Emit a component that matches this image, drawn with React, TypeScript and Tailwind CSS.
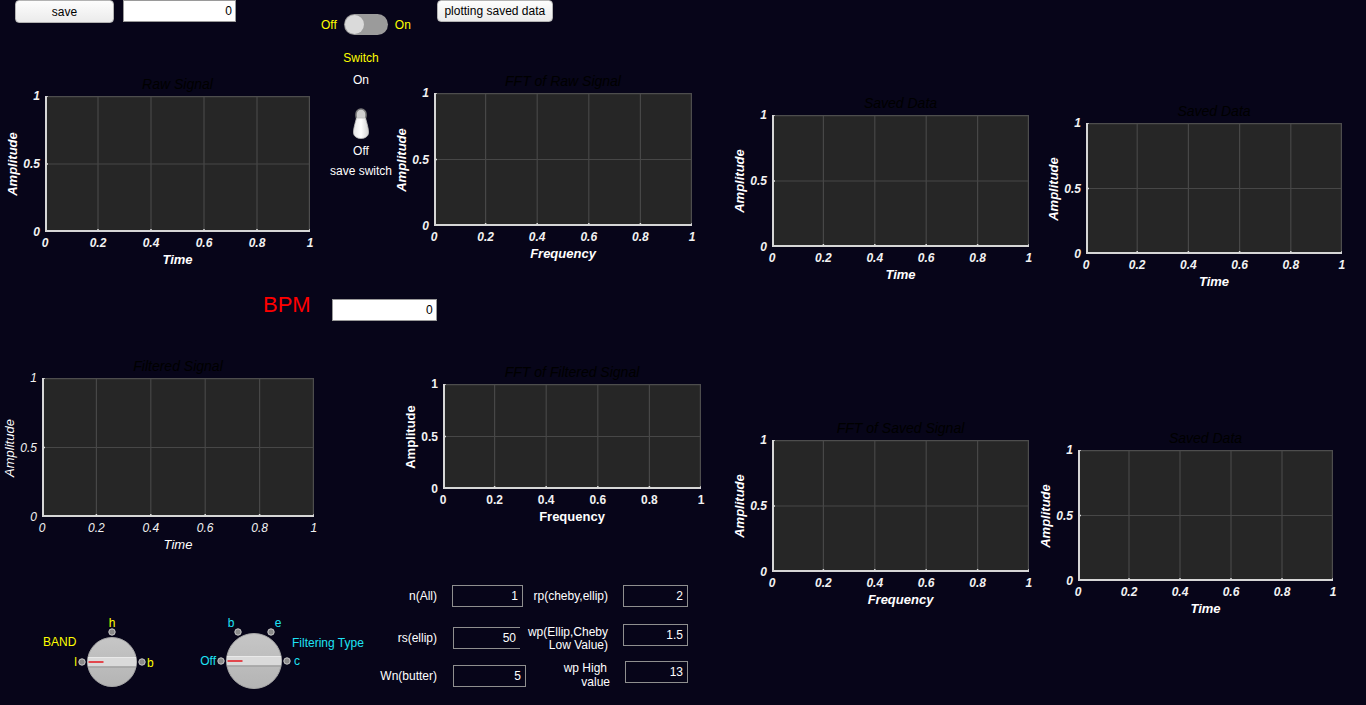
import React from "react";

type Variant = "bi" | "i" | "b";

interface PlotProps {
  title: string;
  xlabel: string;
  w: number;
  h: number;
  variant?: Variant;
  className?: string;
}

const labelStyle = (v: Variant) =>
  v === "bi" ? "font-bold italic" : v === "i" ? "italic" : "font-bold";

const Plot = ({ title, xlabel, w, h, variant = "bi", className = "" }: PlotProps) => {
  const lbl = labelStyle(variant);
  const xs = [0, 1, 2, 3, 4, 5];
  return (
    <div className={`grid grid-cols-[22px_21px_auto] ${className}`}>
      {/* title (black, nearly hidden on the dark figure) */}
      <div className="col-start-3 row-start-1 h-[16px] mb-[4px] text-center text-[14px] leading-[16px] italic text-black whitespace-nowrap">
        {title}
      </div>
      <div className="col-start-1 row-start-2 flex items-center justify-center">
        <span className={`-rotate-90 whitespace-nowrap text-[13px] leading-[16px] text-white ${lbl}`}>
          Amplitude
        </span>
      </div>
      <div className="col-start-2 row-start-2 -my-[7px] pr-[5px] flex flex-col justify-between items-end">
        {["1", "0.5", "0"].map((t) => (
          <span key={t} className={`h-[14px] leading-[14px] text-[12px] text-[#f2f2f2] whitespace-nowrap ${lbl}`}>
            {t}
          </span>
        ))}
      </div>
      <svg className="col-start-3 row-start-2 block" width={w} height={h}>
        <rect x={0} y={0} width={w} height={h} fill="#262626" />
        {[1, 2, 3, 4].map((i) => (
          <line key={i} x1={(w * i) / 5} y1={0} x2={(w * i) / 5} y2={h} stroke="#474747" strokeWidth={1.2} />
        ))}
        <line x1={0} y1={h / 2} x2={w} y2={h / 2} stroke="#474747" strokeWidth={1.2} />
        <line x1={0} y1={0.6} x2={w} y2={0.6} stroke="#4d4d4d" strokeWidth={1.2} />
        <line x1={w - 0.6} y1={0} x2={w - 0.6} y2={h} stroke="#4d4d4d" strokeWidth={1.2} />
        {xs.map((i) => (
          <line key={i} x1={(w * i) / 5} y1={h} x2={(w * i) / 5} y2={h - 3} stroke="#d6d6d6" strokeWidth={1.5} />
        ))}
        {[0, 0.5, 1].map((f) => (
          <line key={f} x1={0} y1={h * f} x2={3} y2={h * f} stroke="#d6d6d6" strokeWidth={1.5} />
        ))}
        <line x1={1} y1={0} x2={1} y2={h} stroke="#d6d6d6" strokeWidth={2} />
        <line x1={0} y1={h - 1} x2={w} y2={h - 1} stroke="#d6d6d6" strokeWidth={2} />
      </svg>
      <div className="col-start-3 row-start-3 mt-[4px] -mx-[12px] flex justify-between">
        {["0", "0.2", "0.4", "0.6", "0.8", "1"].map((t) => (
          <span key={t} className={`w-[24px] text-center leading-[14px] text-[12px] text-[#f2f2f2] ${lbl}`}>
            {t}
          </span>
        ))}
      </div>
      <div className={`col-start-3 row-start-4 mt-[2px] text-center text-[13px] leading-[16px] text-white ${lbl}`}>
        {xlabel}
      </div>
    </div>
  );
};

const Field = ({ value, className = "" }: { value: string; className?: string }) => (
  <div
    className={`h-[22px] shrink-0 border border-[#8f8f8f] text-right pr-[4px] text-[12px] leading-[20px] text-white ${className}`}
  >
    {value}
  </div>
);

const Dot = ({ x, y }: { x: number; y: number }) => (
  <circle cx={x} cy={y} r={3.2} fill="#8a8a8a" stroke="#c8c8c8" strokeWidth={1} />
);

const KnobBody = ({ cx, cy, r, id }: { cx: number; cy: number; r: number; id: string }) => (
  <g>
    <defs>
      <linearGradient id={`${id}-g`} x1="0" y1="0" x2="0" y2="1">
        <stop offset="0" stopColor="#c6c6c6" />
        <stop offset="1" stopColor="#b4b4b4" />
      </linearGradient>
      <clipPath id={`${id}-c`}>
        <circle cx={cx} cy={cy} r={r} />
      </clipPath>
    </defs>
    <circle cx={cx} cy={cy} r={r} fill={`url(#${id}-g)`} stroke="#a6a6a6" strokeWidth={1} />
    <g clipPath={`url(#${id}-c)`}>
      <rect x={cx - r} y={cy - 4.5} width={r * 2} height={9} fill="#dadada" />
      <line x1={cx - r} y1={cy - 4.5} x2={cx + r} y2={cy - 4.5} stroke="#e9e9e9" strokeWidth={1} />
      <line x1={cx - r} y1={cy + 5} x2={cx + r} y2={cy + 5} stroke="#a2a2a2" strokeWidth={1.5} />
    </g>
    <line x1={cx - r + 1} y1={cy} x2={cx - r + 16} y2={cy} stroke="#e2474d" strokeWidth={2} />
  </g>
);

const LeverSwitch = () => (
  <svg width={18} height={31} className="block">
    <defs>
      <linearGradient id="lever" x1="0" y1="0" x2="1" y2="0">
        <stop offset="0" stopColor="#e6e6e6" />
        <stop offset="0.5" stopColor="#ffffff" />
        <stop offset="1" stopColor="#d4d4d4" />
      </linearGradient>
    </defs>
    <rect x={4} y={1} width={10} height={12} rx={5} fill="#cfcfcf" stroke="#7a7a7a" strokeWidth={1.5} />
    <path d="M4.5 10 L13.5 10 Q17 22 16.5 25 A7.5 5.5 0 0 1 1.5 25 Q1 22 4.5 10 Z" fill="url(#lever)" stroke="#bdbdbd" strokeWidth={0.8} />
  </svg>
);

const App = () => {
  return (
    <div className="w-full h-[705px] overflow-hidden bg-[#070519] flex font-['Liberation_Sans',Arial,sans-serif]">
      {/* LEFT HALF */}
      <div className="w-[720px] shrink-0 flex flex-col">
        {/* top bar */}
        <div className="h-[35px] flex items-start">
          <button className="ml-[15px] w-[99px] h-[23px] rounded-[4px] border border-[#b3b3b3] bg-gradient-to-b from-[#fdfdfd] to-[#ebebeb] text-[12px] text-black">
            save
          </button>
          <div className="ml-[9px] w-[113px] h-[22px] bg-white border border-[#9a9a9a] text-right pr-[3px] text-[12px] leading-[20px] text-black">
            0
          </div>
          <div className="ml-[85px] mt-[14px] h-[21px] flex items-center text-[12px] text-[#ffff00]">
            <span>Off</span>
            <div className="ml-[7px] w-[44px] h-[21px] rounded-full bg-[#9b9b9b] flex items-center pl-[1px]">
              <div className="w-[19px] h-[19px] rounded-full bg-[#dadada]" />
            </div>
            <span className="ml-[7px]">On</span>
          </div>
          <button className="ml-[26px] w-[116px] h-[22px] rounded-[4px] border border-[#b3b3b3] bg-gradient-to-b from-[#fdfdfd] to-[#ebebeb] text-[12px] text-black whitespace-nowrap">
            plotting saved data
          </button>
        </div>

        {/* raw signal row */}
        <div className="flex items-start">
          <Plot className="ml-[2px] mt-[41px]" title="Raw Signal" xlabel="Time" w={265} h={136} />
          <div className="ml-[22px] mt-[16px] w-[58px] flex flex-col items-center text-[12px] leading-[14px] whitespace-nowrap">
            <span className="text-[#ffff00]">Switch</span>
            <span className="mt-[8px] text-white">On</span>
            <div className="mt-[21px]">
              <LeverSwitch />
            </div>
            <span className="mt-[5px] text-white">Off</span>
            <span className="mt-[6px] text-white">save switch</span>
          </div>
          <Plot className="ml-[1px] mt-[38px]" title="FFT of Raw Signal" xlabel="Frequency" w={258} h={133} />
        </div>

        {/* BPM */}
        <div className="flex items-start">
          <span className="ml-[263px] mt-[24px] text-[22px] leading-[26px] text-[#ff0000]">BPM</span>
          <div className="ml-[21px] mt-[31px] w-[105px] h-[22px] bg-white border border-[#9a9a9a] text-right pr-[3px] text-[12px] leading-[20px] text-black">
            0
          </div>
        </div>

        {/* filtered row */}
        <div className="flex items-start">
          <Plot className="-ml-[1px] mt-[37px]" title="Filtered Signal" xlabel="Time" w={272} h={139} variant="i" />
          <Plot className="ml-[86px] mt-[43px]" title="FFT of Filtered Signal" xlabel="Frequency" w={258} h={105} variant="b" />
        </div>

        {/* knobs and filter parameters */}
        <div className="flex items-start">
          <svg width={125} height={80} className="ml-[40px] mt-[59px] block">
            <text x={3} y={34} fontSize={12} fill="#ffff00">BAND</text>
            <text x={72} y={15} fontSize={12} fill="#ffff00" textAnchor="middle">h</text>
            <text x={37} y={54} fontSize={12} fill="#ffff00" textAnchor="end">l</text>
            <text x={107} y={55} fontSize={12} fill="#ffff00">b</text>
            <Dot x={72} y={20} />
            <Dot x={42} y={50} />
            <Dot x={102} y={50} />
            <KnobBody cx={72} cy={50} r={24.5} id="k1" />
          </svg>
          <svg width={180} height={80} className="ml-[25px] mt-[59px] block">
            <text x={26} y={53} fontSize={12} fill="#1ee3f5" textAnchor="end">Off</text>
            <text x={41} y={15} fontSize={12} fill="#1ee3f5" textAnchor="middle">b</text>
            <text x={88} y={15} fontSize={12} fill="#1ee3f5" textAnchor="middle">e</text>
            <text x={104} y={53} fontSize={12} fill="#1ee3f5">c</text>
            <text x={102} y={35} fontSize={12} fill="#1ee3f5">Filtering Type</text>
            <Dot x={31} y={49} />
            <Dot x={48} y={20} />
            <Dot x={81} y={20} />
            <Dot x={97} y={49} />
            <KnobBody cx={64} cy={49} r={27.5} id="k2" />
          </svg>

          <div className="flex flex-col text-[12px] text-white">
            <div className="mt-[32px] flex items-center">
              <span className="w-[67px] text-right">n(All)</span>
              <Field className="ml-[15px] w-[71px]" value="1" />
            </div>
            <div className="mt-[20px] flex items-center">
              <span className="w-[67px] text-right">rs(ellip)</span>
              <Field className="ml-[16px] w-[67px] border-r-0" value="50" />
            </div>
            <div className="mt-[16px] flex items-center">
              <span className="w-[67px] text-right">Wn(butter)</span>
              <Field className="ml-[16px] w-[73px]" value="5" />
            </div>
          </div>
          <div className="ml-[1px] flex flex-col text-[12px] text-white">
            <div className="mt-[32px] flex items-center">
              <span className="w-[81px] text-right whitespace-nowrap">rp(cheby,ellip)</span>
              <Field className="ml-[15px] w-[65px]" value="2" />
            </div>
            <div className="mt-[17px] flex items-start">
              <span className="w-[81px] mt-[2px] text-right leading-[13px] whitespace-nowrap">
                wp(Ellip,Cheby
                <br />
                Low Value)
              </span>
              <Field className="ml-[15px] w-[65px]" value="1.5" />
            </div>
            <div className="mt-[9px] flex items-start">
              <span className="w-[83px] text-right leading-[14px] whitespace-nowrap">
                <span className="pr-[3px]">wp High</span>
                <br />
                value
              </span>
              <Field className="ml-[15px] w-[63px]" value="13" />
            </div>
          </div>
        </div>
      </div>

      {/* RIGHT HALF */}
      <div className="flex-1 flex flex-col">
        <div className="flex items-start">
          <Plot className="ml-[9px] mt-[95px]" title="Saved Data" xlabel="Time" w={257} h={132} />
          <Plot className="ml-[14px] mt-[103px]" title="Saved Data" xlabel="Time" w={256} h={131} />
        </div>
        <div className="flex items-start">
          <Plot className="ml-[9px] mt-[130px]" title="FFT of Saved Signal" xlabel="Frequency" w={257} h={132} />
          <Plot className="ml-[6px] mt-[140px]" title="Saved Data" xlabel="Time" w={255} h={131} />
        </div>
      </div>
    </div>
  );
};

export default App;
